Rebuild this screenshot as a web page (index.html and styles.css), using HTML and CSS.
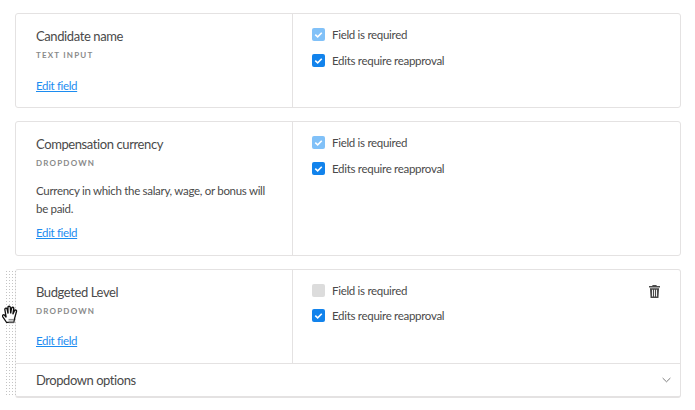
FILE: index.html
```html
<!DOCTYPE html>
<html lang="en">
<head>
<meta charset="utf-8">
<title>Fields</title>
<link rel="stylesheet" href="styles.css">
</head>
<body>
<main class="list">
  <section class="card card-a">
    <div class="row">
      <div class="info">
        <h3 class="name">Candidate name</h3>
        <div class="type">TEXT INPUT</div>
        <a class="edit" href="#">Edit field</a>
      </div>
      <div class="opts">
        <label class="opt"><span class="box light"><svg viewBox="0 0 16 16"><path d="M4 8.2l3 2.6 5-5"/></svg></span>Field is required</label>
        <label class="opt"><span class="box on"><svg viewBox="0 0 16 16"><path d="M4 8.2l3 2.6 5-5"/></svg></span>Edits require reapproval</label>
      </div>
    </div>
  </section>
  <section class="card card-b">
    <div class="row">
      <div class="info">
        <h3 class="name">Compensation currency</h3>
        <div class="type">DROPDOWN</div>
        <p class="desc">Currency in which the salary, wage, or bonus will be paid.</p>
        <a class="edit" href="#">Edit field</a>
      </div>
      <div class="opts">
        <label class="opt"><span class="box light"><svg viewBox="0 0 16 16"><path d="M4 8.2l3 2.6 5-5"/></svg></span>Field is required</label>
        <label class="opt"><span class="box on"><svg viewBox="0 0 16 16"><path d="M4 8.2l3 2.6 5-5"/></svg></span>Edits require reapproval</label>
      </div>
    </div>
  </section>
  <section class="card card-c">
    <div class="handle"></div>
    <svg class="hand" viewBox="1 1 15.500 17">
      <path d="M5.2 16.8 1.6 11.4c-.8-1.3.9-2.3 1.8-1.2l1.4 1.8-1.2-7c-.2-1.5 1.8-1.7 2.1-.3l.8 4-.1-5.6c0-1.500 2.100-1.500 2.200 0l.3 5.500.8-4.800c.3-1.400 2.200-1.100 2 .3l-.8 5.200 1.500-3.300c.6-1.200 2.200-.5 1.800.8l-1.600 5.800-.9 4.100H6.200z"/>
      <path class="grip" d="M7 14h5M7 15.500h5M7 17h5"/>
    </svg>
    <div class="row">
      <div class="info">
        <h3 class="name">Budgeted Level</h3>
        <div class="type">DROPDOWN</div>
        <a class="edit" href="#">Edit field</a>
      </div>
      <div class="opts">
        <label class="opt"><span class="box off"></span>Field is required</label>
        <label class="opt"><span class="box on"><svg viewBox="0 0 16 16"><path d="M4 8.2l3 2.6 5-5"/></svg></span>Edits require reapproval</label>
        <svg class="trash" viewBox="0 0 12 14"><path d="M4 0h4l.6 1H12v1.500H0V1h3.400zM1 3.500h10l-.7 10.500H1.700zM3.300 5v7.500h1V5zm2.200 0v7.500h1V5zm2.200 0v7.500h1V5z"/></svg>
      </div>
    </div>
    <div class="foot">
      <span>Dropdown options</span>
      <svg class="chev" viewBox="0 0 10 6"><path d="M.7.8 5 5 9.300.8"/></svg>
    </div>
  </section>
</main>
</body>
</html>
```
FILE: styles.css
```css
* { box-sizing: border-box; }
html, body { margin: 0; background: #fff; }
body {
  font-family: Lato, Roboto, sans-serif;
  color: #4a4a4a;
  overflow: hidden;
  height: 410px;
}
.list {
  display: flex;
  flex-direction: column;
  gap: 13px;
  padding: 13px 14px 0 15px;
}
.card {
  position: relative;
  border: 1px solid #e4e2e2;
  border-radius: 3px;
  background: #fff;
}
.card-a { height: 95px; }
.card-b { height: 135px; }
.card-c { height: 129px; border-bottom-width: 2px; border-left-color: #f0efef; }
.row { display: flex; }
.card-a .row, .card-b .row { height: 100%; }
.card-c .row { height: 93px; }
.info {
  width: 277px;
  flex: none;
  padding: 13px 20px 0;
  border-right: 1px solid #e4e2e2;
}
.name {
  margin: 0;
  font-size: 13px;
  line-height: 19px;
  font-weight: 400;
  letter-spacing: -0.4px;
  color: #4a4a4a;
}
.type {
  margin-top: 3px;
  font-size: 8px;
  line-height: 12px;
  font-weight: 700;
  letter-spacing: 1.200px;
  color: #8a8a8a;
}
.desc {
  margin: 13px 0 0;
  font-size: 11.500px;
  line-height: 18px;
  letter-spacing: -0.3px;
  color: #4a4a4a;
}
.edit {
  display: block;
  width: max-content;
  margin-top: 17px;
  font-size: 11.500px;
  line-height: 16px;
  letter-spacing: -0.35px;
  color: #1c8cf0;
  text-decoration: underline;
}
.desc + .edit { margin-top: 7px; }
.card-c .edit { margin-top: 16px; }
.opts {
  position: relative;
  flex: 1;
  padding: 11px 20px 0 19px;
  display: flex;
  flex-direction: column;
  gap: 8px;
}
.card-c .opts { gap: 7px; }
.opt {
  display: flex;
  align-items: center;
  gap: 7px;
  height: 18px;
  font-size: 11.500px;
  letter-spacing: -0.3px;
  color: #4a4a4a;
}
.box {
  width: 13px;
  height: 13px;
  border-radius: 2px;
  flex: none;
}
.box svg { display: block; width: 13px; height: 13px; }
.box path { fill: none; stroke: #fff; stroke-width: 2; }
.box.on { background: #1283ec; }
.box.light { background: #81c1f8; }
.box.off { background: #dcdcdc; }
.trash {
  position: absolute;
  top: 15px;
  right: 20px;
  width: 11px;
  height: 13px;
  fill: #4a4a4a;
}
.foot {
  height: 33px;
  border-top: 1px solid #e4e2e2;
  padding: 0 9px 1px 20px;
  display: flex;
  align-items: center;
  justify-content: space-between;
  font-size: 13px;
  letter-spacing: -0.45px;
}
.chev { width: 9px; height: 6px; fill: none; stroke: #6e6e6e; stroke-width: 1; }
.handle {
  position: absolute;
  left: -11px;
  top: 0;
  bottom: -1px;
  width: 11px;
  background-image: radial-gradient(circle, #c4c4c4 0.7px, transparent 1px);
  background-size: 3px 3px;
}
.hand {
  position: absolute;
  left: -14px;
  top: 35px;
  width: 17px;
  height: 19px;
  z-index: 1;
}
.hand path { fill: #fff; stroke: #111; stroke-width: 1.2; }
.hand .grip { fill: none; stroke: #777; stroke-width: 0.8; }
```
